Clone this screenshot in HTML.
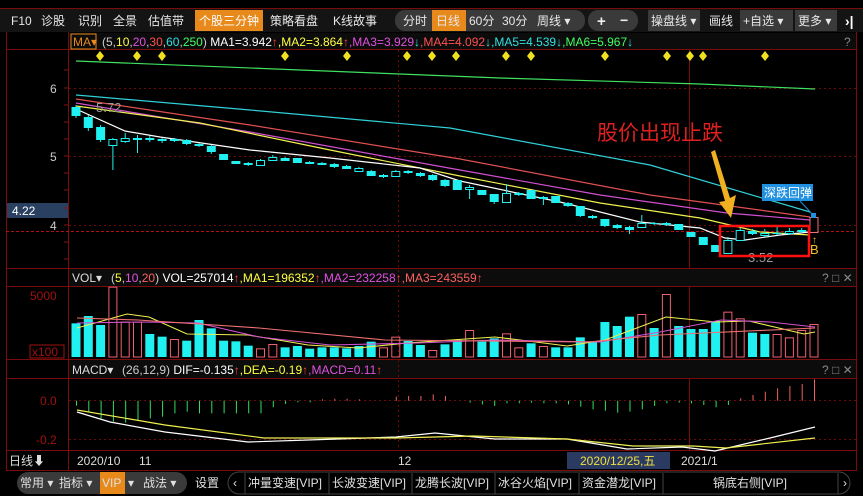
<!DOCTYPE html>
<html><head><meta charset="utf-8"><style>
html,body{margin:0;padding:0;background:#000;width:863px;height:496px;overflow:hidden}
svg{display:block}
text{font-family:"Liberation Sans","Noto Sans CJK SC",sans-serif;font-size:12px}
</style></head><body>
<svg id="s" width="863" height="496" viewBox="0 0 863 496" xmlns="http://www.w3.org/2000/svg">
<rect width="863" height="496" fill="#000"/>
<rect x="0" y="8" width="863" height="24" fill="#141414"/>
<line x1="0" y1="8.5" x2="863" y2="8.5" stroke="#7a0c0c"/>
<g fill="#e8e8e8">
<text x="11" y="25">F10</text><text x="41" y="25">诊股</text><text x="78" y="25">识别</text><text x="113" y="25">全景</text><text x="148" y="25">估值带</text>
</g>
<rect x="195" y="10" width="68" height="21" fill="#e8891c"/>
<text x="199" y="25" fill="#fff">个股三分钟</text>
<text x="270" y="25" fill="#e8e8e8">策略看盘</text><text x="333" y="25" fill="#e8e8e8">K线故事</text>
<rect x="395" y="10" width="190" height="21" rx="10" fill="#3a3a3a"/>
<rect x="432" y="10" width="34" height="21" fill="#e8891c"/>
<g fill="#e8e8e8"><text x="403" y="25">分时</text><text x="436" y="25">日线</text><text x="469" y="25">60分</text><text x="502" y="25">30分</text><text x="537" y="25">周线 ▾</text></g>
<rect x="588" y="10" width="50" height="21" rx="10" fill="#3a3a3a"/>
<text x="597" y="26" fill="#eee" font-weight="bold" style="font-size:15px">+</text><text x="620" y="25" fill="#eee" font-weight="bold" style="font-size:14px">−</text>
<rect x="648" y="10" width="52" height="21" fill="#3a3a3a"/>
<text x="651" y="25" fill="#e8e8e8">操盘线 ▾</text>
<text x="709" y="25" fill="#e8e8e8">画线</text>
<rect x="740" y="10" width="53" height="21" fill="#3a3a3a"/>
<text x="743" y="25" fill="#e8e8e8">+自选 ▾</text>
<rect x="795" y="10" width="42" height="21" fill="#3a3a3a"/>
<text x="798" y="25" fill="#e8e8e8">更多 ▾</text>
<text x="845" y="26" fill="#fff" font-weight="bold" style="font-size:14px">›|</text>
<g stroke="#7a0c0c" fill="none">
<line x1="6.5" y1="32" x2="6.5" y2="470"/>
<line x1="856.5" y1="32" x2="856.5" y2="470"/>
<line x1="68.5" y1="32" x2="68.5" y2="470"/>
<line x1="6" y1="49.5" x2="857" y2="49.5"/>
<line x1="6" y1="268.5" x2="857" y2="268.5"/>
<line x1="6" y1="286.5" x2="857" y2="286.5"/>
<line x1="6" y1="359.5" x2="857" y2="359.5"/>
<line x1="6" y1="378.5" x2="857" y2="378.5"/>
<line x1="6" y1="450.5" x2="857" y2="450.5"/>
<line x1="6" y1="470.5" x2="857" y2="470.5"/>
<line x1="689.5" y1="50" x2="689.5" y2="450"/>
</g>
<rect x="69" y="33" width="787" height="16" fill="#0c0c0c"/>
<rect x="69" y="269" width="787" height="17" fill="#0c0c0c"/>
<rect x="69" y="360" width="787" height="18" fill="#0c0c0c"/>
<g stroke="#6a0a0a" stroke-dasharray="2,3">
<line x1="69" y1="88.5" x2="856" y2="88.5"/><line x1="69" y1="156.5" x2="856" y2="156.5"/>
<line x1="69" y1="225.5" x2="856" y2="225.5"/><line x1="398.5" y1="50" x2="398.5" y2="450"/>
<line x1="69" y1="400.5" x2="856" y2="400.5"/><line x1="69" y1="439.5" x2="856" y2="439.5"/>
</g>
<line x1="6" y1="231.5" x2="856" y2="231.5" stroke="#b01010" stroke-dasharray="3,2"/>
<rect x="71" y="34" width="25" height="15" fill="none" stroke="#e8891c"/>
<text x="73" y="46" fill="#e8891c">MA▾</text>
<text x="102" y="46"><tspan fill="#ccc">(5,</tspan><tspan fill="#ffff40">10</tspan><tspan fill="#ccc">,</tspan><tspan fill="#e050e0">20</tspan><tspan fill="#ccc">,</tspan><tspan fill="#ff5050">30</tspan><tspan fill="#ccc">,</tspan><tspan fill="#30e0e0">60</tspan><tspan fill="#ccc">,</tspan><tspan fill="#40ff60">250</tspan><tspan fill="#ccc">) </tspan><tspan fill="#fff">MA1=3.942</tspan><tspan fill="#ff4040">↑</tspan><tspan fill="#ffff40">,MA2=3.864</tspan><tspan fill="#ff4040">↑</tspan><tspan fill="#e050e0">,MA3=3.929</tspan><tspan fill="#30e0e0">↓</tspan><tspan fill="#ff5050">,MA4=4.092</tspan><tspan fill="#30e0e0">↓</tspan><tspan fill="#30e0e0">,MA5=4.539</tspan><tspan fill="#30e0e0">↓</tspan><tspan fill="#40ff60">,MA6=5.967</tspan><tspan fill="#30e0e0">↓</tspan></text>
<text x="844" y="46" fill="#888">?</text>
<g fill="#ccc"><text x="50" y="93">6</text><text x="50" y="161">5</text><text x="50" y="230">4</text></g>
<rect x="7" y="203" width="61" height="15" fill="#2a4060"/>
<text x="12" y="215" fill="#fff">4.22</text>
<g stroke="#8a1010"><line x1="64" y1="70" x2="68" y2="70"/><line x1="64" y1="88" x2="68" y2="88"/><line x1="64" y1="105" x2="68" y2="105"/><line x1="64" y1="122" x2="68" y2="122"/><line x1="64" y1="139" x2="68" y2="139"/><line x1="64" y1="156" x2="68" y2="156"/><line x1="64" y1="173" x2="68" y2="173"/><line x1="64" y1="190" x2="68" y2="190"/><line x1="64" y1="208" x2="68" y2="208"/><line x1="64" y1="225" x2="68" y2="225"/><line x1="64" y1="242" x2="68" y2="242"/><line x1="64" y1="259" x2="68" y2="259"/></g>
<g fill="none" stroke-width="1.2">
<polyline stroke="#40e060" points="76,61 300,70 500,78 700,84 815,89"/>
<polyline stroke="#30d0d8" points="76,95 250,110 450,128 650,165 810,212"/>
<polyline stroke="#e05050" points="76,99 250,125 460,159 650,195 810,217"/>
<polyline stroke="#d050d0" points="76,103 250,132 460,170 600,195 727,213 810,220"/>
<polyline stroke="#f0f050" points="76,106 200,123 330,150 460,176 600,203 700,218 760,232 810,235"/>
<polyline stroke="#fff" points="76,109 125,131 160,137 250,150 330,158 420,168 460,181 560,202 640,222 700,228 725,238 745,240 780,235 810,232"/>
</g>
<g id="cand"></g>
<text x="96" y="112" fill="#999" style="font-size:13px">5.72</text>
<line x1="722" y1="256" x2="742" y2="256" stroke="#bbb"/>
<text x="748" y="262" fill="#999" style="font-size:13px">3.52</text>
<text x="597" y="140" fill="#e02020" style="font-size:21px">股价出现止跌</text>
<polygon points="711,152 715,150 730,198 736,195 731,218 719,202 725,201" fill="#f0b020"/>
<rect x="720" y="226" width="89" height="30" fill="none" stroke="#ff1010" stroke-width="2.5"/>
<rect x="762" y="184" width="51" height="17" fill="#2090e0"/>
<text x="764" y="197" fill="#fff">深跌回弹</text>
<line x1="800" y1="201" x2="814" y2="216" stroke="#2090e0"/>
<rect x="811" y="213" width="5" height="5" fill="#2090e0"/>
<text x="812" y="243" fill="#f0c030" style="font-size:10px">↑</text>
<text x="810" y="254" fill="#f0c030" style="font-size:13px">B</text>
<g fill="#f0e020" id="dia"></g>
<text x="72" y="282" fill="#ddd">VOL▾</text>
<text x="111" y="282"><tspan fill="#ccc">(</tspan><tspan fill="#ffff40">5</tspan><tspan fill="#ccc">,</tspan><tspan fill="#e050e0">10</tspan><tspan fill="#ccc">,</tspan><tspan fill="#ff6060">20</tspan><tspan fill="#ccc">) </tspan><tspan fill="#fff">VOL=257014</tspan><tspan fill="#ff4040">↑</tspan><tspan fill="#ffff40">,MA1=196352</tspan><tspan fill="#ff4040">↑</tspan><tspan fill="#e050e0">,MA2=232258</tspan><tspan fill="#ff4040">↑</tspan><tspan fill="#ff6060">,MA3=243559</tspan><tspan fill="#ff4040">↑</tspan></text>
<text x="822" y="282" fill="#888">? □ ✕</text>
<text x="30" y="300" fill="#a01010">5000</text>
<rect x="30" y="345" width="34" height="13" fill="none" stroke="#a01010"/>
<text x="32" y="356" fill="#a01010">x100</text>
<g id="vol"></g>
<g fill="none" stroke-width="1.1">
<polyline stroke="#f0f050" points="77,328 127,314 149,317 187,334 248,335 308,345 358,348 407,343 495,337 528,341 567,346 605,340 666,317 716,322 749,321 804,334 815,332"/>
<polyline stroke="#d050d0" points="77,323 143,322 198,323 259,337 330,345 418,343 495,340 600,342 660,332 721,320 770,322 815,327"/>
<polyline stroke="#f07070" points="77,318 138,320 259,328 385,340 589,342 660,335 815,328"/>
</g>
<text x="72" y="374" fill="#ddd">MACD▾</text>
<text x="122" y="374"><tspan fill="#ccc">(26,12,9) </tspan><tspan fill="#fff">DIF=-0.135</tspan><tspan fill="#ff4040">↑</tspan><tspan fill="#ffff40">,DEA=-0.19</tspan><tspan fill="#ff4040">↑</tspan><tspan fill="#e050e0">,MACD=0.11</tspan><tspan fill="#ff4040">↑</tspan></text>
<text x="822" y="374" fill="#888">? □ ✕</text>
<text x="40" y="405" fill="#a01010">0.0</text>
<text x="36" y="444" fill="#a01010">-0.2</text>
<g id="macd"></g>
<g fill="none" stroke-width="1.2">
<polyline stroke="#fff" points="77,412 110,422 165,432 248,442 308,440 396,437 435,433 495,439 567,439 627,449 682,447 715,451 770,438 815,427"/>
<polyline stroke="#f0f050" points="77,410 165,425 264,438 396,438 473,436 567,439 633,446 693,446 726,448 815,438"/>
</g>
<text x="9" y="465" fill="#ddd">日线⬇</text>
<g fill="#ddd"><text x="77" y="465">2020/10</text><text x="139" y="465">11</text><text x="398" y="465">12</text><text x="681" y="465">2021/1</text></g>
<rect x="567" y="452" width="103" height="17" fill="#2a3a60"/>
<text x="580" y="465" fill="#f0e040">2020/12/25,五</text>
<rect x="17" y="472" width="170" height="22" rx="11" fill="#3a3a3a"/>
<rect x="100" y="472" width="25" height="22" fill="#e8891c"/>
<g fill="#e0e0e0"><text x="20" y="487">常用 ▾</text><text x="59" y="487">指标 ▾</text><text x="102" y="487">VIP</text><text x="128" y="487">▾</text><text x="143" y="487">战法 ▾</text><text x="195" y="487">设置</text></g>
<rect x="228" y="472" width="622" height="22" rx="11" fill="none" stroke="#444"/>
<g stroke="#444"><line x1="245" y1="473" x2="245" y2="494"/><line x1="329" y1="473" x2="329" y2="494"/><line x1="412" y1="473" x2="412" y2="494"/><line x1="495" y1="473" x2="495" y2="494"/><line x1="579" y1="473" x2="579" y2="494"/><line x1="663" y1="473" x2="663" y2="494"/><line x1="838" y1="473" x2="838" y2="494"/></g>
<g fill="#e0e0e0"><text x="233" y="487">‹</text><text x="248" y="487">冲量变速[VIP]</text><text x="332" y="487">长波变速[VIP]</text><text x="415" y="487">龙腾长波[VIP]</text><text x="498" y="487">冰谷火焰[VIP]</text><text x="582" y="487">资金潜龙[VIP]</text><text x="713" y="487">锅底右侧[VIP]</text><text x="843" y="487">›</text></g>
</svg>
<script>
var NS="http://www.w3.org/2000/svg";
function el(p,t,a){var e=document.createElementNS(NS,t);for(var k in a)e.setAttribute(k,a[k]);document.getElementById(p).appendChild(e);}
var C=[[107,116,105,118,'f'],[117,128,115,131,'f'],[127,140,125,142,'f'],[139,145,138,170,'h'],[138,141,133,143,'h'],[138,140,135,153,'f'],[138,140,136,142,'f'],[139,141,138,143,'f'],[139,141,138,142,'f'],[140,144,139,145,'f'],[144,146,143,147,'f'],[146,152,145,154,'f'],[154,160,154,160,'f'],[161,164,161,164,'f'],[163,165,162,166,'f'],[160,165,159,166,'h'],[157,160,155,161,'h'],[158,161,157,161,'f'],[158,163,158,163,'f'],[162,164,161,164,'f'],[163,165,162,165,'f'],[164,167,163,168,'f'],[166,169,165,169,'f'],[168,171,167,172,'h'],[171,176,170,176,'f'],[175,177,174,178,'f'],[171,176,170,177,'h'],[171,173,170,174,'f'],[173,176,172,177,'f'],[175,180,174,181,'f'],[180,186,179,187,'f'],
[180,190,180,190,'f'],[187,189,185,199,'h'],[190,195,190,195,'f'],[194,202,194,204,'f'],[193,202,184,202,'h'],[193,195,192,196,'f'],[190,199,190,199,'f'],[197,199,196,205,'f'],[196,203,196,203,'f'],[203,206,202,207,'f'],[206,216,206,217,'f'],[216,218,215,219,'f'],[219,226,219,227,'f'],[225,228,224,229,'f'],[227,230,226,234,'f'],[223,227,215,228,'h'],[223,224,222,225,'f'],[223,225,222,226,'f'],[224,230,224,230,'f'],[232,237,232,237,'f'],[237,245,237,245,'f'],[245,252,245,252,'f'],[240,253,237,253,'h'],[230,240,228,241,'h'],[231,234,229,235,'f'],[233,235,229,237,'h'],[233,234,226,235,'f'],[231,233,228,235,'h'],[230,232,228,233,'f'],[217,232,215,233,'p']];
var cy="#20f0f0";
C.forEach(function(c,i){var x=76+12.3*i;var col=c[4]=='p'?'#f07080':cy;
el('cand','line',{x1:x,y1:c[2],x2:x,y2:c[3],stroke:col});
if(c[4]=='f')el('cand','rect',{x:x-4.5,y:c[0],width:9,height:Math.max(1,c[1]-c[0]),fill:col});
else el('cand','rect',{x:x-4,y:c[0]+.5,width:8,height:Math.max(1,c[1]-c[0]),fill:'#000',stroke:col});});
var V="190f168f195f80h185h185h222f230f237h242f180f205f242f244f257f265h252h262f258f266f262f262f265f258f245f262h230h243f255f270h253f240f210h245f235f220h262h250f258h262f262f232f244f186f198f170f162h204f102h198f207f207f183f155h175h218f222f222h232h210h192h".match(/\d+[fh]/g);
V.forEach(function(v,i){var x=76+12.3*i;var y=260+parseInt(v)/3;var h=357-y;
if(v.slice(-1)=='f')el('vol','rect',{x:x-4.5,y:y,width:9,height:h,fill:cy});
else el('vol','rect',{x:x-4,y:y+.5,width:8,height:h-.5,fill:'none',stroke:'#f06070'});});
var M=[107,125,145,155,158,150,145,140,130,125,130,130,130,130,130,130,112,102,97,97,88,86,86,88,92,92,80,78,78,73,78,92,98,103,108,100,100,98,100,100,103,110,118,122,128,125,118,108,100,98,100,105,112,105,85,75,65,55,48,42,28];
M.forEach(function(m,i){var x=76+12.3*i+.5;if(Math.abs(m-92)<1)return;var y=370+m/3;
el('macd','line',{x1:x,y1:400.7,x2:x,y2:y,stroke:m>92?'#30e060':'#f06060'});});
[100,137,162,285,347,407,432,456,506,531,605,667,690,703,765].forEach(function(x){el('dia','polygon',{points:x+',51 '+(x+4)+',56 '+x+',61 '+(x-4)+',56'});});
</script>
</body></html>
